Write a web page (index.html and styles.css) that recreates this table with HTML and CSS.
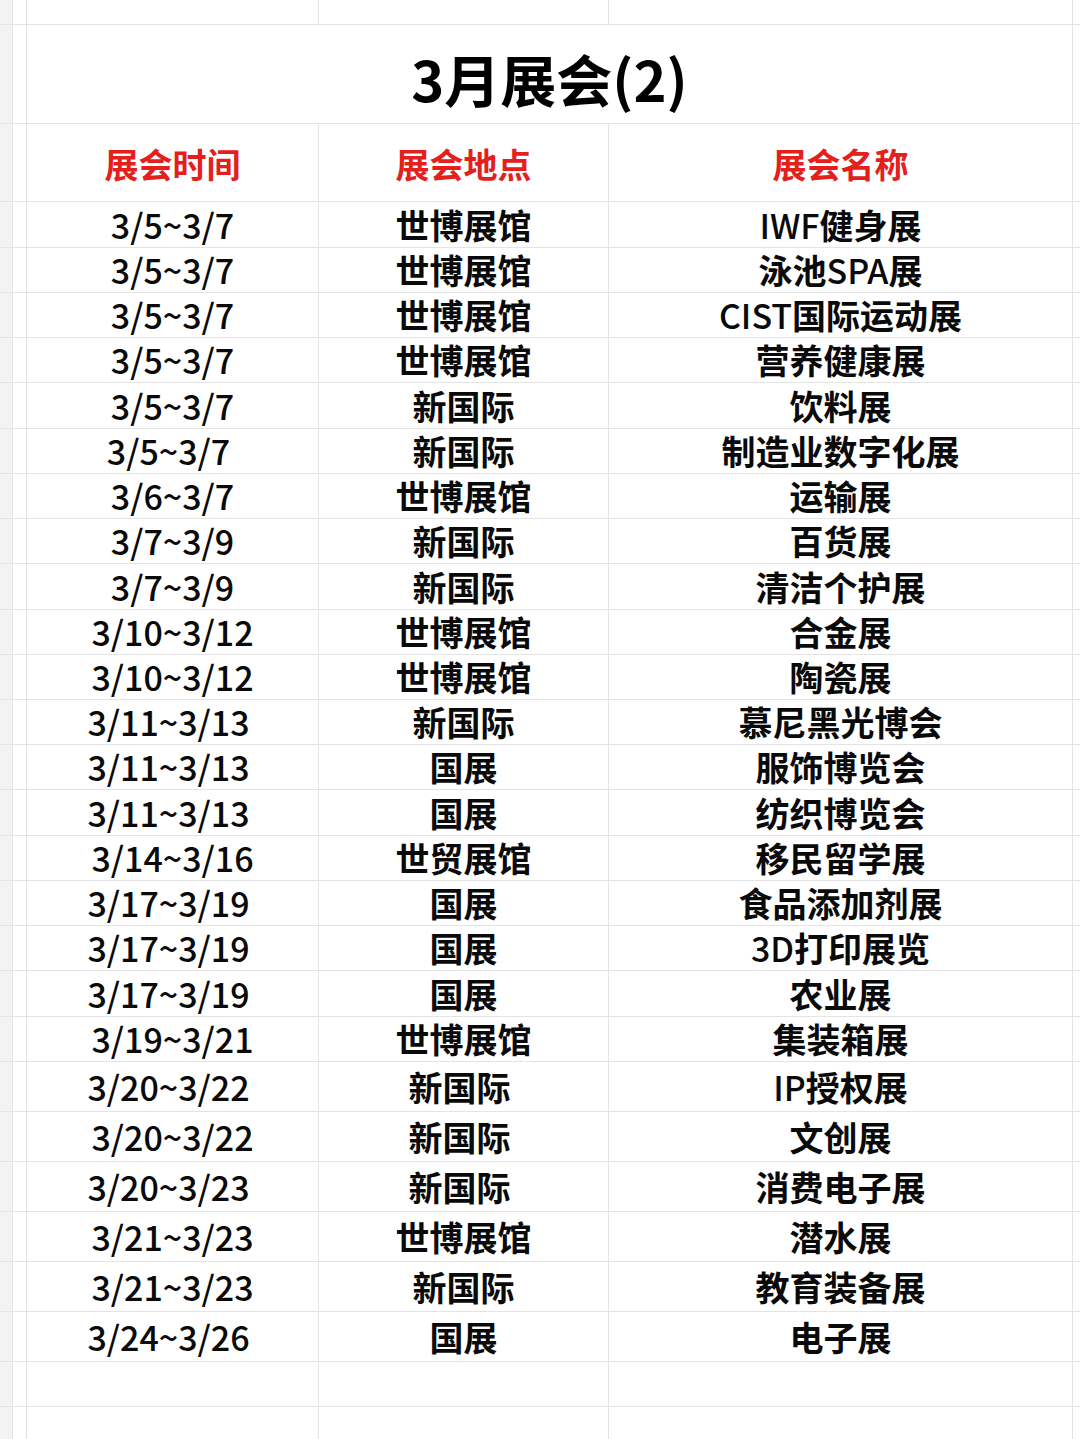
FILE: index.html
```html
<!DOCTYPE html>
<html lang="zh-CN">
<head>
<meta charset="utf-8">
<title>3月展会(2)</title>
<link rel="stylesheet" href="styles.css">
</head>
<body>
<div class="sheet">
  <div class="row top"><div class="g"></div><div class="c"></div><div class="c"></div><div class="c"></div><div class="c"></div><div class="c"></div></div>
  <div class="row title-row"><div class="g"></div><div class="c"></div><div class="c title">3月展会(2)</div><div class="c"></div></div>
  <div class="row head"><div class="g"></div><div class="c"></div><div class="c h">展会时间</div><div class="c h">展会地点</div><div class="c h">展会名称</div><div class="c"></div></div>

  <div class="row t"><div class="g"></div><div class="c"></div><div class="c d n">3/5~3/7</div><div class="c d">世博展馆</div><div class="c d"><span class="lat">IWF</span>健身展</div><div class="c"></div></div>
  <div class="row"><div class="g"></div><div class="c"></div><div class="c d n">3/5~3/7</div><div class="c d">世博展馆</div><div class="c d">泳池<span class="lat">SPA</span>展</div><div class="c"></div></div>
  <div class="row"><div class="g"></div><div class="c"></div><div class="c d n">3/5~3/7</div><div class="c d">世博展馆</div><div class="c d"><span class="lat">CIST</span>国际运动展</div><div class="c"></div></div>
  <div class="row"><div class="g"></div><div class="c"></div><div class="c d n">3/5~3/7</div><div class="c d">世博展馆</div><div class="c d">营养健康展</div><div class="c"></div></div>
  <div class="row t"><div class="g"></div><div class="c"></div><div class="c d n">3/5~3/7</div><div class="c d">新国际</div><div class="c d">饮料展</div><div class="c"></div></div>
  <div class="row"><div class="g"></div><div class="c"></div><div class="c d n off">3/5~3/7</div><div class="c d">新国际</div><div class="c d">制造业数字化展</div><div class="c"></div></div>
  <div class="row"><div class="g"></div><div class="c"></div><div class="c d n">3/6~3/7</div><div class="c d">世博展馆</div><div class="c d">运输展</div><div class="c"></div></div>
  <div class="row"><div class="g"></div><div class="c"></div><div class="c d n">3/7~3/9</div><div class="c d">新国际</div><div class="c d">百货展</div><div class="c"></div></div>
  <div class="row t"><div class="g"></div><div class="c"></div><div class="c d n">3/7~3/9</div><div class="c d">新国际</div><div class="c d">清洁个护展</div><div class="c"></div></div>
  <div class="row"><div class="g"></div><div class="c"></div><div class="c d n">3/10~3/12</div><div class="c d">世博展馆</div><div class="c d">合金展</div><div class="c"></div></div>
  <div class="row"><div class="g"></div><div class="c"></div><div class="c d n">3/10~3/12</div><div class="c d">世博展馆</div><div class="c d">陶瓷展</div><div class="c"></div></div>
  <div class="row"><div class="g"></div><div class="c"></div><div class="c d n off">3/11~3/13</div><div class="c d">新国际</div><div class="c d">慕尼黑光博会</div><div class="c"></div></div>
  <div class="row"><div class="g"></div><div class="c"></div><div class="c d n off">3/11~3/13</div><div class="c d">国展</div><div class="c d">服饰博览会</div><div class="c"></div></div>
  <div class="row t"><div class="g"></div><div class="c"></div><div class="c d n off">3/11~3/13</div><div class="c d">国展</div><div class="c d">纺织博览会</div><div class="c"></div></div>
  <div class="row"><div class="g"></div><div class="c"></div><div class="c d n">3/14~3/16</div><div class="c d">世贸展馆</div><div class="c d">移民留学展</div><div class="c"></div></div>
  <div class="row"><div class="g"></div><div class="c"></div><div class="c d n off">3/17~3/19</div><div class="c d">国展</div><div class="c d">食品添加剂展</div><div class="c"></div></div>
  <div class="row"><div class="g"></div><div class="c"></div><div class="c d n off">3/17~3/19</div><div class="c d">国展</div><div class="c d"><span class="lat">3D</span>打印展览</div><div class="c"></div></div>
  <div class="row t"><div class="g"></div><div class="c"></div><div class="c d n off">3/17~3/19</div><div class="c d">国展</div><div class="c d">农业展</div><div class="c"></div></div>
  <div class="row"><div class="g"></div><div class="c"></div><div class="c d n">3/19~3/21</div><div class="c d">世博展馆</div><div class="c d">集装箱展</div><div class="c"></div></div>

  <div class="row w"><div class="g"></div><div class="c"></div><div class="c d n off">3/20~3/22</div><div class="c d off">新国际</div><div class="c d"><span class="lat">IP</span>授权展</div><div class="c"></div></div>
  <div class="row w"><div class="g"></div><div class="c"></div><div class="c d n">3/20~3/22</div><div class="c d off">新国际</div><div class="c d">文创展</div><div class="c"></div></div>
  <div class="row w"><div class="g"></div><div class="c"></div><div class="c d n off">3/20~3/23</div><div class="c d off">新国际</div><div class="c d">消费电子展</div><div class="c"></div></div>
  <div class="row w"><div class="g"></div><div class="c"></div><div class="c d n">3/21~3/23</div><div class="c d">世博展馆</div><div class="c d">潜水展</div><div class="c"></div></div>
  <div class="row w"><div class="g"></div><div class="c"></div><div class="c d n">3/21~3/23</div><div class="c d">新国际</div><div class="c d">教育装备展</div><div class="c"></div></div>
  <div class="row w"><div class="g"></div><div class="c"></div><div class="c d n off">3/24~3/26</div><div class="c d">国展</div><div class="c d">电子展</div><div class="c"></div></div>

  <div class="row"><div class="g"></div><div class="c"></div><div class="c"></div><div class="c"></div><div class="c"></div><div class="c"></div></div>
  <div class="row"><div class="g"></div><div class="c"></div><div class="c"></div><div class="c"></div><div class="c"></div><div class="c"></div></div>
</div>
</body>
</html>
```
FILE: styles.css
```css
html, body {
  margin: 0;
  padding: 0;
  background: #ffffff;
}

body {
  width: 1080px;
  height: 1439px;
  overflow: hidden;
  font-family: "Noto Sans CJK SC", "Noto Sans", sans-serif;
  color: #0a0a0a;
}

.sheet {
  display: flex;
  flex-direction: column;
  gap: 1px;
  background: #e4e4e4;
  width: 1080px;
}

.row {
  display: grid;
  grid-template-columns: 12px 13px 291px 289px 463px 1fr;
  gap: 1px;
  height: 44px;
}

.row.t { height: 45px; }
.row.w { height: 49px; }
.row.top { height: 24px; }
.row.title-row {
  height: 98px;
  grid-template-columns: 12px 13px 1045px 1fr;
}
.row.head { height: 77px; }

.g { background: #f3f3f3; }
.c { background: #ffffff; }

.c.d, .c.h, .c.title {
  display: flex;
  align-items: center;
  justify-content: center;
  white-space: nowrap;
}

.d {
  font-size: 34px;
  line-height: 40px;
  font-weight: 700;
}

.d.n, .lat {
  font-weight: 500;
}

.d.off {
  padding-right: 8px;
}

.h {
  font-size: 34px;
  line-height: 40px;
  font-weight: 700;
  color: #e3201c;
  padding-top: 2px;
}

.title {
  font-size: 56px;
  line-height: 64px;
  font-weight: 700;
  padding-top: 8px;
  color: #000000;
}
```
